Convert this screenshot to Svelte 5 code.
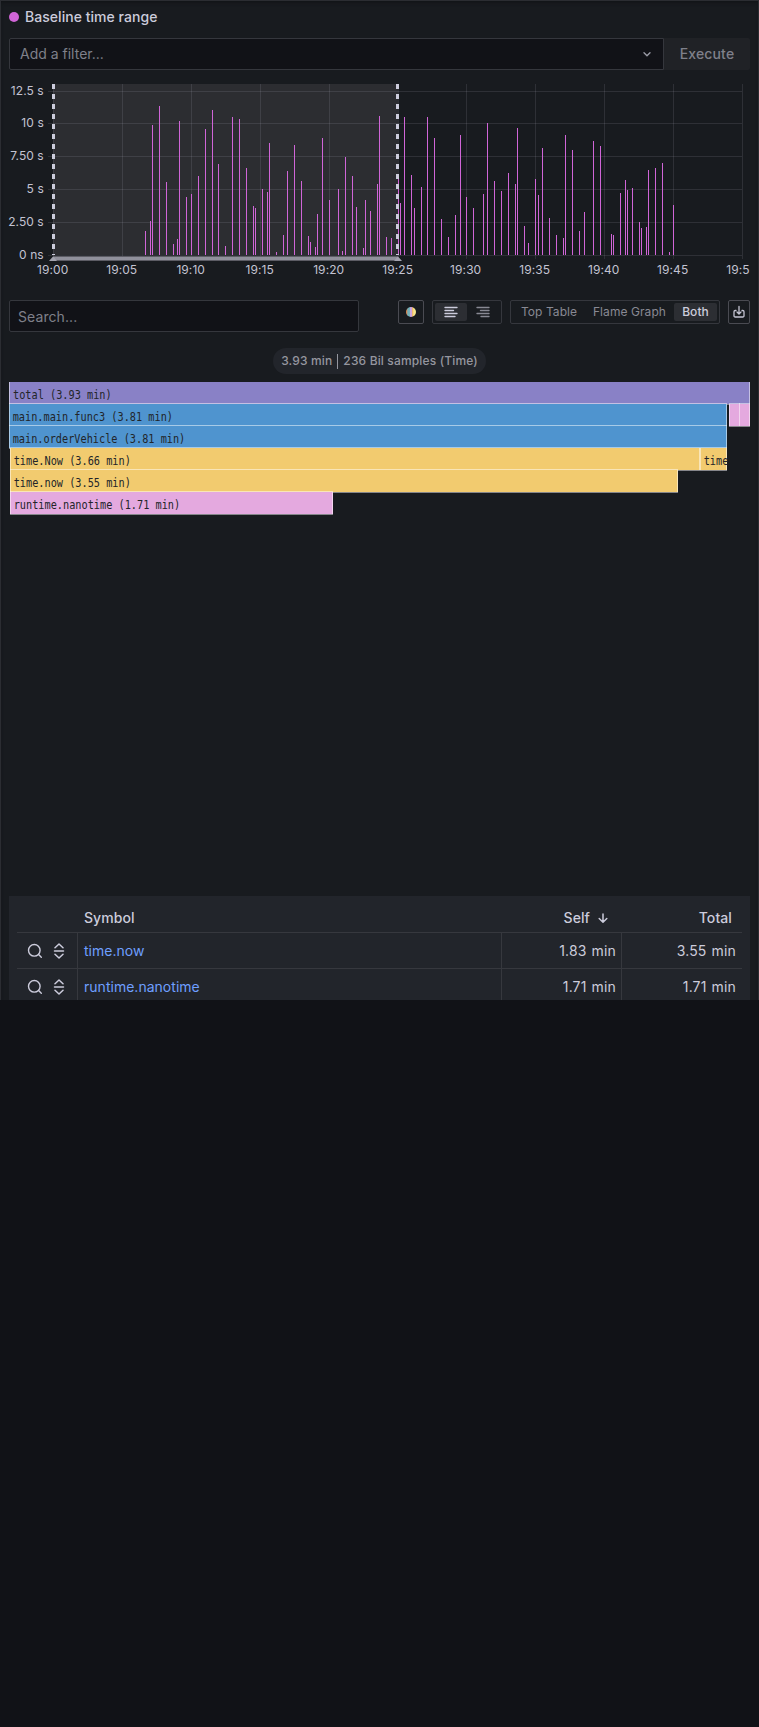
<script>
  const bars = [
    [145,231],[150,221],[152,125],[159,106],[166,182],[173,244],[177,239],[179,121],[186,197],[191,194],
    [198,176],[205,129],[212,110],[218,164],[225,246],[232,117],[239,119],[246,168],[253,206],[255,208],
    [262,189],[267,192],[269,143],[276,252],[283,235],[287,171],[294,145],[301,181],[308,236],[310,242],
    [315,247],[317,214],[322,138],[329,200],[338,189],[342,251],[345,157],[352,176],[356,207],[363,248],
    [365,200],[370,211],[377,184],[379,116],[386,237],[391,238],[398,178],[400,203],[404,117],[411,175],
    [414,208],[421,187],[427,117],[434,138],[441,219],[448,237],[455,215],[460,135],[466,197],[473,208],
    [483,194],[487,123],[494,181],[501,191],[508,173],[515,184],[517,128],[524,226],[528,243],[535,179],
    [538,195],[542,148],[549,218],[556,235],[563,238],[565,135],[572,150],[579,231],[584,212],[593,141],
    [600,146],[611,234],[613,235],[620,193],[625,180],[627,190],[632,188],[639,222],[641,228],[646,227],
    [648,170],[655,168],[662,163],[669,252],[673,205]
  ];
  const yTicks = [[91,'12.5 s'],[123,'10 s'],[156,'7.50 s'],[189,'5 s'],[222,'2.50 s'],[255,'0 ns']];
  const xTicks = [[53,'19:00'],[122,'19:05'],[191,'19:10'],[260,'19:15'],[329,'19:20'],[398,'19:25'],[466,'19:30'],[535,'19:35'],[604,'19:40'],[673,'19:45'],[742,'19:5']];
  const frames = [
    { x: 9, w: 741, row: 0, c: '#8981c6', t: 'total (3.93 min)' },
    { x: 9, w: 718, row: 1, c: '#4f94cf', t: 'main.main.func3 (3.81 min)' },
    { x: 729, w: 11, row: 1, c: '#e4a9df', t: '' },
    { x: 739, w: 11, row: 1, c: '#e4a9df', t: '' },
    { x: 9, w: 718, row: 2, c: '#4f94cf', t: 'main.orderVehicle (3.81 min)' },
    { x: 10, w: 690, row: 3, c: '#f2cb6f', t: 'time.Now (3.66 min)' },
    { x: 700, w: 27, row: 3, c: '#f2cb6f', t: 'time' },
    { x: 10, w: 668, row: 4, c: '#f2cb6f', t: 'time.now (3.55 min)' },
    { x: 10, w: 323, row: 5, c: '#e4a9df', t: 'runtime.nanotime (1.71 min)' }
  ];
  const rows = [['time.now', '1.83 min', '3.55 min'], ['runtime.nanotime', '1.71 min', '1.71 min']];
</script>

<main class="panel">
  <header class="title"><span class="dot"></span>Baseline time range</header>

  <div class="filter">
    <div class="field">
      <span>Add a filter...</span>
      <svg width="16" height="16" viewBox="0 0 16 16" fill="none" stroke="#9a9ba6" stroke-width="1.4" stroke-linecap="round" stroke-linejoin="round"><path d="M5 6.8l3 3 3-3" /></svg>
    </div>
    <button class="execute">Execute</button>
  </div>

  <svg class="chart" width="757" height="210" viewBox="1 75 757 210">
    <rect x="53" y="84" width="345" height="171" fill="#2c2d31" />
    <g fill="#ccccdc" fill-opacity=".12">
      {#each yTicks as [y]}<rect x="48" {y} width="694" height="1" />{/each}
      {#each xTicks as [x]}<rect {x} y="84" width="1" height="175" />{/each}
    </g>
    <g fill="#d065d7">
      {#each bars as [x, y]}<rect {x} {y} width="1" height={255 - y} />{/each}
    </g>
    <rect x="53" y="256" width="345" height="5" fill="#5c5c64" />
    <rect x="53" y="257" width="345" height="3" fill="#90909b" />
    <path d="M49 261l4-4.5 4 4.5zM394 261l4-4.5 4 4.5z" fill="#a3a3af" />
    <path d="M53.5 84V255M397.5 84V255" stroke="#ccccdc" stroke-width="3" stroke-dasharray="5 5" />
    <g class="ticks" text-anchor="end">
      {#each yTicks as [y, label]}<text x="43.8" y={y + 4}>{label}</text>{/each}
    </g>
    <g class="ticks" text-anchor="middle">
      {#each xTicks as [x, label], i}<text x={i === 10 ? 738 : x - 0.3} y="274">{label}</text>{/each}
    </g>
  </svg>

  <div class="toolbar">
    <div class="search">Search...</div>
    <div class="tools">
      <button class="box color"><span class="swatch"></span></button>
      <div class="group">
        <span class="seg active align"><svg width="16" height="16" viewBox="0 0 16 16" fill="none" stroke="currentColor" stroke-width="1.35" stroke-linecap="round"><path d="M2 3.5h12M2 6.5h8.5M2 9.5h12M2 12.5h10" /></svg></span>
        <span class="seg align"><svg width="16" height="16" viewBox="0 0 16 16" fill="none" stroke="currentColor" stroke-width="1.35" stroke-linecap="round"><path d="M2 3.5h12M5.5 6.5H14M2 9.5h12M6 12.5h8" /></svg></span>
      </div>
      <div class="group tabs">
        <span class="seg">Top Table</span><span class="seg">Flame Graph</span><span class="seg active">Both</span>
      </div>
      <button class="box save"><svg width="14" height="14" viewBox="0 0 14 14" fill="none" stroke="#c5c5d3" stroke-width="1.3" stroke-linecap="round" stroke-linejoin="round"><path d="M4 5.500H3.200A1.200 1.200 0 0 0 2 6.700v4A1.200 1.200 0 0 0 3.200 12h7.600A1.200 1.200 0 0 0 12 10.700v-4A1.200 1.200 0 0 0 10.800 5.500H10M7 1.500v7.300M5 7l2 2 2-2" /></svg></button>
    </div>
  </div>

  <div class="pill">3.93 min <i></i> 236 Bil samples (Time)</div>

  <svg class="flame" width="757" height="134" viewBox="1 382 757 134">
    {#each frames as f}
      {@const y = 382 + f.row * 22}
      <rect x={f.x} {y} width={f.w} height="22" fill={f.c} />
      <rect x={f.x} y={y + 22} width={f.w} height="1" fill="#85868a" />
      {#if f.row}<rect x={f.x} y={y - 1} width={f.w} height="1" fill="#fff" fill-opacity=".5" />{/if}
      <path d="M{f.x + 0.5} {y}v22M{f.x + f.w - 0.5} {y}v22" stroke="#fff" stroke-opacity=".5" />
      <text transform="translate({f.x + (f.row ? 3.700 : 4)} {y + 17}) scale(.789 1)">{f.t}</text>
    {/each}
  </svg>

  <section class="table">
    <div class="row head">
      <span></span><span class="sym">Symbol</span>
      <span class="num">Self <svg width="12" height="12" viewBox="0 0 12 12" fill="none" stroke="currentColor" stroke-width="1.5" stroke-linecap="round" stroke-linejoin="round"><path d="M6 2v8M2.200 6.500L6 10.200l3.800-3.700" /></svg></span>
      <span class="num">Total</span>
    </div>
    {#each rows as [name, self, total]}
      <div class="row">
        <span class="icons">
          <svg width="16" height="16" viewBox="0 0 16 16" fill="none" stroke="currentColor" stroke-width="1.4" stroke-linecap="round"><circle cx="7.300" cy="7.300" r="5.800" /><path d="M11.600 11.600l2.700 2.700" /></svg>
          <svg width="12" height="16" viewBox="0 0 12 16" fill="none" stroke="currentColor" stroke-width="1.5" stroke-linecap="round" stroke-linejoin="round"><path d="M2 4.700L6 1l4 3.700M1.500 8h9M2 11.300L6 15l4-3.700" /></svg>
        </span>
        <span class="sym link">{name}</span><span class="num">{self}</span><span class="num">{total}</span>
      </div>
    {/each}
  </section>
</main>

<style>
  :global(body) { margin: 0; background: #111217; }
  :global(#app) { font-family: Inter, sans-serif; }
  * { box-sizing: border-box; }
  svg { display: block; flex: none; }
  button { font: inherit; letter-spacing: inherit; padding: 0; margin: 0; }
  .panel {
    width: 759px; height: 1000px; overflow: hidden; background: #181b1f;
    border: 1px solid #2b2d32; border-bottom: 0; color: #ccccdc;
    font-size: 14px; letter-spacing: .15px; line-height: 22px; white-space: nowrap;
    box-shadow: inset 0 3px 4px -2px #101215;
  }
  .title { display: flex; align-items: center; gap: 6px; height: 22px; margin: 5px 0 0 8px; font-weight: 500; letter-spacing: .04px; }
  .dot { width: 10px; height: 10px; border-radius: 50%; background: #d065d7; }
  .filter { display: flex; height: 32px; margin: 10px 8px 0; }
  .field { flex: 1; display: flex; align-items: center; justify-content: space-between; padding: 0 8px 0 10px; background: #111217; border: 1px solid #35373d; border-radius: 2px 0 0 2px; color: #7f808a; letter-spacing: 0; }
  .execute { width: 86px; background: #202226; border: 0; border-radius: 0 2px 2px 0; color: #7f808a; font-weight: 500; }
  .chart { margin-top: 5px; }
  .ticks { font-size: 12px; fill: #c3c3d2; letter-spacing: .08px; }
  .toolbar { display: flex; justify-content: space-between; height: 32px; margin: 15px 8px 0; }
  .search { width: 350px; height: 32px; padding: 5px 8px; line-height: 22px; background: #111217; border: 1px solid #35373d; border-radius: 2px; color: #7f808a; letter-spacing: .08px; }
  .tools { display: flex; gap: 8px; height: 24px; }
  .box { display: flex; align-items: center; justify-content: center; background: none; border: 1px solid #4a4b52; border-radius: 2px; }
  .color { width: 26px; }
  .save { width: 22px; }
  .swatch { width: 10px; height: 10px; border-radius: 50%; background: linear-gradient(90deg, #df8b54 0 8%, #70b0b9 18% 34%, #cba6df 45% 55%, #f0b86f 65%, #f7e98b 80%); }
  .group { display: flex; padding: 2px; border: 1px solid #35373d; border-radius: 2px; font-size: 12px; color: #888993; }
  .seg { display: flex; align-items: center; justify-content: center; height: 18px; padding: 0 8px; border-radius: 2px; }
  .align { width: 32px; padding: 0; }
  .tabs { width: 210px; letter-spacing: .07px; }
  .tabs .seg { padding: 0; width: 72px; }
  .tabs .seg:nth-child(2) { width: 89px; }
  .active { background: #2c2e33; color: #ccccdc; }
  .tabs .seg.active { width: 43px; font-weight: 500; }
  .pill { display: flex; align-items: center; justify-content: center; width: 213px; height: 26px; margin: 16px auto 0; border-radius: 13px; background: #22252b; color: #95969f; font-size: 12px; font-weight: 500; letter-spacing: .15px; }
  .pill i { width: 1px; height: 15px; margin: 0 5px; background: #95969f; }
  .flame { margin-top: 8px; }
  .flame text { font: 13px "DejaVu Sans Mono", monospace; fill: #222529; letter-spacing: 0; }
  .table { height: 104px; margin: 380px 8px 0; padding: 0 8px; background: #22252b; }
  .row { display: grid; grid-template-columns: 61px 424px 120px 120px; height: 36px; border-bottom: 1px solid #36383e; }
  .row > span { display: flex; align-items: center; border-right: 1px solid #36383e; }
  .row > span:last-child { border-right: 0; }
  .head { height: 37px; padding-top: 8px; font-weight: 500; }
  .row.head > span { border: 0; }
  .sym { padding-left: 6px; }
  .head .sym { letter-spacing: .05px; }
  .link { color: #6e9fff; letter-spacing: .02px; }
  .num { justify-content: flex-end; padding-right: 5px; gap: 7px; word-spacing: 1px; letter-spacing: .15px; }
  .row > .num:last-child { padding-right: 6px; }
  .head > .num { padding-right: 13px; letter-spacing: .1px; }
  .row.head > .num:last-child { padding-right: 10px; }
  .icons { gap: 10px; padding-left: 10px; }
</style>
